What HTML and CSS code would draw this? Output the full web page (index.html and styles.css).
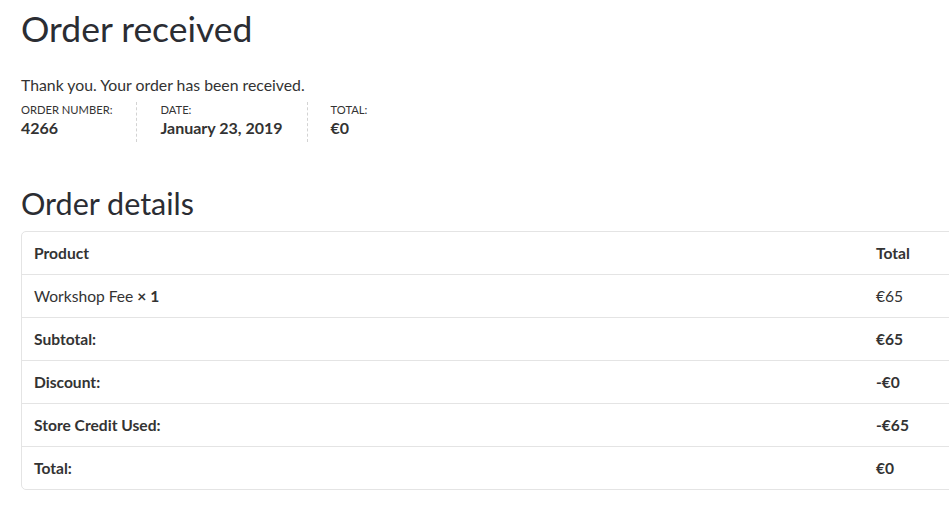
FILE: index.html
```html
<!DOCTYPE html>
<html lang="en">
<head>
    <meta charset="UTF-8">
    <meta name="viewport" content="width=device-width, initial-scale=1.0">
    <title>Order received</title>
    <link rel="stylesheet" href="styles.css">
</head>
<body>
    <div class="page">
        <h1 class="page-title">Order received</h1>
        <p class="thank-you">Thank you. Your order has been received.</p>
        <ul class="order-overview">
            <li class="overview-item">Order number:<strong>4266</strong></li>
            <li class="overview-item">Date:<strong>January 23, 2019</strong></li>
            <li class="overview-item">Total:<strong>€0</strong></li>
        </ul>

        <h2 class="details-title">Order details</h2>
        <table class="order-table">
            <thead>
                <tr>
                    <th class="col-product">Product</th>
                    <th>Total</th>
                </tr>
            </thead>
            <tbody>
                <tr>
                    <td>Workshop Fee <strong>× 1</strong></td>
                    <td>€65</td>
                </tr>
            </tbody>
            <tfoot>
                <tr>
                    <th>Subtotal:</th>
                    <td>€65</td>
                </tr>
                <tr>
                    <th>Discount:</th>
                    <td>-€0</td>
                </tr>
                <tr>
                    <th>Store Credit Used:</th>
                    <td>-€65</td>
                </tr>
                <tr>
                    <th>Total:</th>
                    <td>€0</td>
                </tr>
            </tfoot>
        </table>
    </div>
</body>
</html>
```

FILE: styles.css
```css
body {
    margin: 0;
    font-family: Lato, "Open Sans", sans-serif;
    color: #333;
    background-color: #fff;
    overflow-x: hidden;
}
.page {
    padding: 8px 21px 0;
    width: 1000px;
}
.page-title {
    font-size: 35.5px;
    font-weight: 400;
    color: #2b2d33;
    margin: 0 0 24px;
    line-height: 1.2;
}
.thank-you {
    font-size: 15.8px;
    margin: 0 0 7px;
    line-height: 20px;
}
.order-overview {
    list-style: none;
    margin: 0;
    padding: 0;
    display: flex;
}
.overview-item {
    font-size: 11.2px;
    text-transform: uppercase;
    line-height: 16px;
    padding: 0 24px 5px 0;
    margin-right: 23px;
    border-right: 1px dashed #d3d3d3;
}
.overview-item:last-child {
    border-right: none;
}
.overview-item strong {
    display: block;
    font-size: 16px;
    text-transform: none;
    line-height: 19px;
}
.details-title {
    font-size: 30.5px;
    font-weight: 400;
    color: #2b2d33;
    margin: 43px 0 10px;
    line-height: 36px;
}
.order-table {
    width: 1000px;
    border-collapse: separate;
    border-spacing: 0;
    border: 1px solid #e4e4e4;
    border-radius: 5px;
    font-size: 15.6px;
}
.order-table th,
.order-table td {
    text-align: left;
    padding: 0 12px;
    height: 42px;
    border-top: 1px solid #e4e4e4;
}
.order-table thead th {
    border-top: none;
}
.order-table th {
    font-weight: 700;
}
.col-product {
    width: 818px;
}
.order-table tfoot td {
    font-weight: 700;
}
```
